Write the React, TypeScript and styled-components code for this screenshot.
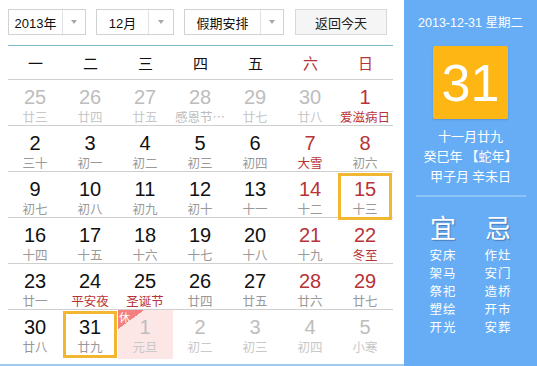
import React from "react";
import styled, { createGlobalStyle } from "styled-components";

const Global = createGlobalStyle`
  html, body { margin: 0; padding: 0; background: #fff; }
  body { font-family: "Liberation Sans", Arial, "Noto Sans CJK SC", sans-serif; }
  * { box-sizing: border-box; }
`;

const Page = styled.div`
  display: flex;
  width: 537px;
  height: 366px;
  overflow: hidden;
`;

const Left = styled.div`
  width: 404px;
  padding: 9px 11px 0 8px;
  display: flex;
  flex-direction: column;
  border-bottom: 2px solid #9ccaf0;
  height: 366px;
`;

const Toolbar = styled.div`
  display: flex;
  height: 26px;
`;

const Select = styled.div<{ $w: number; $text: number; $gap: number }>`
  width: ${(p) => p.$w}px;
  margin-right: ${(p) => p.$gap}px;
  height: 26px;
  border: 1px solid #d2d2d2;
  display: grid;
  grid-template-columns: ${(p) => p.$text}px 1fr;
  background: #fff;
  font-size: 13px;
  color: #111;
`;

const SelectText = styled.div<{ $cjk?: boolean }>`
  display: flex;
  align-items: center;
  justify-content: center;
  border-right: 1px solid #e2e2e2;
  font-family: ${(p) =>
    p.$cjk
      ? '"Noto Sans CJK SC", sans-serif'
      : '"Liberation Sans", Arial, "Noto Sans CJK SC", sans-serif'};
`;

const Arrow = styled.div`
  display: flex;
  align-items: center;
  justify-content: center;
  &::after {
    content: "";
    border-left: 3.5px solid transparent;
    border-right: 3.5px solid transparent;
    border-top: 4px solid #a8a8a8;
  }
`;

const Button = styled.div`
  width: 92px;
  height: 26px;
  border: 1px solid #d8d8d8;
  background: #f5f5f5;
  font-size: 13px;
  color: #222;
  display: flex;
  align-items: center;
  justify-content: center;
  font-family: "Noto Sans CJK SC", sans-serif;
`;

const Grid = styled.div`
  margin-top: 10px;
  border-top: 1px solid #7fbccc;
  display: flex;
  flex-direction: column;
`;

const WeekHead = styled.div`
  display: grid;
  grid-template-columns: repeat(7, 55px);
  height: 34px;
  border-bottom: 1px solid #cfcfcf;
`;

const WeekDay = styled.div<{ $red?: boolean }>`
  display: flex;
  align-items: center;
  justify-content: center;
  font-size: 15px;
  font-family: "Noto Sans CJK SC", sans-serif;
  color: ${(p) => (p.$red ? "#b5333a" : "#111")};
`;

const Row = styled.div<{ $last?: boolean }>`
  display: grid;
  grid-template-columns: repeat(7, 55px);
  height: 46px;
  border-bottom: ${(p) => (p.$last ? "none" : "1px solid #cfcfcf")};
`;

const Cell = styled.div<{ $holiday?: boolean }>`
  position: relative;
  padding: 1px 1px 1px 0;
  background: ${(p) => (p.$holiday ? "#fde6e6" : "transparent")};
`;

const Box = styled.div<{ $sel?: boolean }>`
  height: 100%;
  border: 3px solid ${(p) => (p.$sel ? "#f2b630" : "transparent")};
  display: flex;
  flex-direction: column;
  align-items: center;
  padding-top: 3px;
`;

type Tone = "muted" | "normal" | "red";

const toneColor = (t: Tone) =>
  t === "muted" ? "#bdbdbd" : t === "red" ? "#b83337" : "#111";

const Num = styled.div<{ $tone: Tone }>`
  font-size: 20px;
  line-height: 20px;
  color: ${(p) => toneColor(p.$tone)};
  font-family: "Liberation Sans", Arial, sans-serif;
`;

const Lunar = styled.div<{ $tone: Tone; $fest?: boolean }>`
  margin-top: 2px;
  font-size: 12.5px;
  line-height: 16px;
  white-space: nowrap;
  font-family: "Noto Sans CJK SC", sans-serif;
  color: ${(p) =>
    p.$fest
      ? p.$tone === "muted"
        ? "#bdbdbd"
        : "#b83337"
      : p.$tone === "muted"
      ? "#c8c8c8"
      : "#999"};
`;

const Badge = styled.div`
  position: absolute;
  z-index: 2;
  left: 0;
  top: 0;
  width: 26px;
  height: 19px;
  background: linear-gradient(to bottom right, #f47f7f 50%, rgba(244, 127, 127, 0) 50.5%);
  color: #fff;
  font-size: 11px;
  line-height: 12px;
  padding: 1px 0 0 1px;
  font-family: "Noto Sans CJK SC", sans-serif;
`;

const Right = styled.div`
  flex: 1;
  background: #66adf5;
  color: #fff;
  display: flex;
  flex-direction: column;
  align-items: center;
  font-family: "Noto Sans CJK SC", "Liberation Sans", sans-serif;
`;

const DateLine = styled.div`
  margin-top: 14px;
  font-size: 12.5px;
  line-height: 18px;
  font-family: "Liberation Sans", Arial, "Noto Sans CJK SC", sans-serif;
`;

const BigDay = styled.div`
  margin-top: 14px;
  width: 75px;
  height: 73px;
  background: #fdb614;
  border-radius: 2px;
  box-shadow: 0 1px 2px rgba(0, 0, 0, 0.15);
  display: flex;
  align-items: center;
  justify-content: center;
  font-size: 52px;
  font-family: "Liberation Sans", Arial, sans-serif;
`;

const Info = styled.div`
  margin-top: 7px;
  display: flex;
  flex-direction: column;
  align-items: center;
  font-size: 13px;
  line-height: 20px;
`;

const Divider = styled.div`
  margin-top: 9px;
  width: 110px;
  height: 2px;
  background: #8ec3f8;
`;

const YiJi = styled.div`
  margin-top: 16px;
  display: grid;
  grid-template-columns: 40px 40px;
  column-gap: 15px;
  justify-items: center;
`;

const Col = styled.div`
  display: flex;
  flex-direction: column;
  align-items: center;
`;

const Big = styled.div`
  font-size: 26px;
  line-height: 28px;
  text-shadow: 1px 1px 1px rgba(50, 80, 130, 0.55);
  margin-bottom: 5px;
`;

const Item = styled.div`
  font-size: 12.5px;
  line-height: 18px;
  letter-spacing: 1px;
`;

type D = { n: number; l: string; t: Tone; fest?: boolean; sel?: boolean; hol?: boolean };

const weeks: D[][] = [
  [
    { n: 25, l: "廿三", t: "muted" },
    { n: 26, l: "廿四", t: "muted" },
    { n: 27, l: "廿五", t: "muted" },
    { n: 28, l: "感恩节…", t: "muted", fest: true },
    { n: 29, l: "廿七", t: "muted" },
    { n: 30, l: "廿八", t: "muted" },
    { n: 1, l: "爱滋病日", t: "red", fest: true },
  ],
  [
    { n: 2, l: "三十", t: "normal" },
    { n: 3, l: "初一", t: "normal" },
    { n: 4, l: "初二", t: "normal" },
    { n: 5, l: "初三", t: "normal" },
    { n: 6, l: "初四", t: "normal" },
    { n: 7, l: "大雪", t: "red", fest: true },
    { n: 8, l: "初六", t: "red" },
  ],
  [
    { n: 9, l: "初七", t: "normal" },
    { n: 10, l: "初八", t: "normal" },
    { n: 11, l: "初九", t: "normal" },
    { n: 12, l: "初十", t: "normal" },
    { n: 13, l: "十一", t: "normal" },
    { n: 14, l: "十二", t: "red" },
    { n: 15, l: "十三", t: "red", sel: true },
  ],
  [
    { n: 16, l: "十四", t: "normal" },
    { n: 17, l: "十五", t: "normal" },
    { n: 18, l: "十六", t: "normal" },
    { n: 19, l: "十七", t: "normal" },
    { n: 20, l: "十八", t: "normal" },
    { n: 21, l: "十九", t: "red" },
    { n: 22, l: "冬至", t: "red", fest: true },
  ],
  [
    { n: 23, l: "廿一", t: "normal" },
    { n: 24, l: "平安夜", t: "normal", fest: true },
    { n: 25, l: "圣诞节", t: "normal", fest: true },
    { n: 26, l: "廿四", t: "normal" },
    { n: 27, l: "廿五", t: "normal" },
    { n: 28, l: "廿六", t: "red" },
    { n: 29, l: "廿七", t: "red" },
  ],
  [
    { n: 30, l: "廿八", t: "normal" },
    { n: 31, l: "廿九", t: "normal", sel: true },
    { n: 1, l: "元旦", t: "muted", hol: true },
    { n: 2, l: "初二", t: "muted" },
    { n: 3, l: "初三", t: "muted" },
    { n: 4, l: "初四", t: "muted" },
    { n: 5, l: "小寒", t: "muted" },
  ],
];

const days = ["一", "二", "三", "四", "五", "六", "日"];

export default function App() {
  return (
    <Page>
      <Global />
      <Left>
        <Toolbar>
          <Select $w={78} $text={54} $gap={10}>
            <SelectText>2013年</SelectText>
            <Arrow />
          </Select>
          <Select $w={78} $text={52} $gap={10}>
            <SelectText>12月</SelectText>
            <Arrow />
          </Select>
          <Select $w={100} $text={76} $gap={11}>
            <SelectText $cjk>假期安排</SelectText>
            <Arrow />
          </Select>
          <Button>返回今天</Button>
        </Toolbar>
        <Grid>
          <WeekHead>
            {days.map((d, i) => (
              <WeekDay key={d} $red={i >= 5}>
                {d}
              </WeekDay>
            ))}
          </WeekHead>
          {weeks.map((w, ri) => (
            <Row key={ri} $last={ri === weeks.length - 1}>
              {w.map((d, ci) => (
                <Cell key={ci} $holiday={d.hol}>
                  {d.hol && <Badge>休</Badge>}
                  <Box $sel={d.sel}>
                    <Num $tone={d.t}>{d.n}</Num>
                    <Lunar $tone={d.t} $fest={d.fest}>
                      {d.l}
                    </Lunar>
                  </Box>
                </Cell>
              ))}
            </Row>
          ))}
        </Grid>
      </Left>
      <Right>
        <DateLine>2013-12-31 星期二</DateLine>
        <BigDay>31</BigDay>
        <Info>
          <div>十一月廿九</div>
          <div>癸巳年 【蛇年】</div>
          <div>甲子月 辛未日</div>
        </Info>
        <Divider />
        <YiJi>
          <Col>
            <Big>宜</Big>
            {["安床", "架马", "祭祀", "塑绘", "开光"].map((x) => (
              <Item key={x}>{x}</Item>
            ))}
          </Col>
          <Col>
            <Big>忌</Big>
            {["作灶", "安门", "造桥", "开市", "安葬"].map((x) => (
              <Item key={x}>{x}</Item>
            ))}
          </Col>
        </YiJi>
      </Right>
    </Page>
  );
}
